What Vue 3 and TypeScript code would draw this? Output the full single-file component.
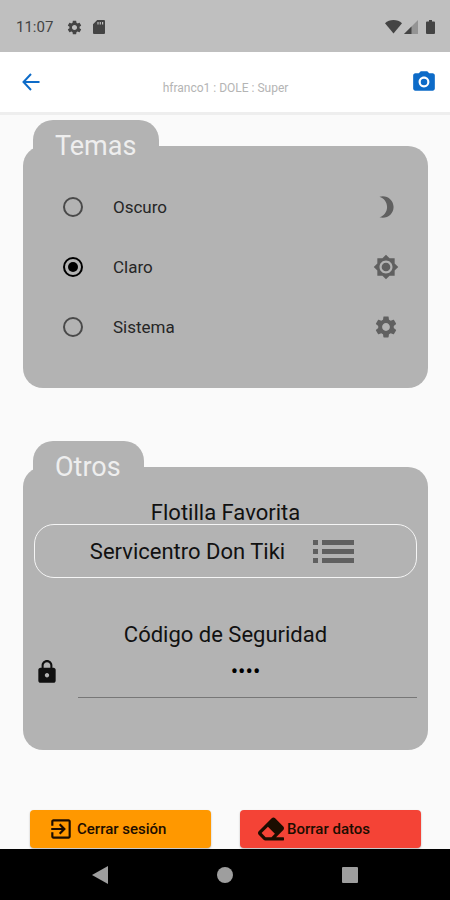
<script setup lang="ts">
import { ref } from 'vue'

interface ThemeOption {
  id: string
  label: string
  icon: string
}

const themes: ThemeOption[] = [
  {
    id: 'oscuro',
    label: 'Oscuro',
    icon: 'M9 2c-1.05 0-2.05.16-3 .46 4.06 1.27 7 5.06 7 9.54 0 4.48-2.94 8.27-7 9.54.95.3 1.95.46 3 .46 5.52 0 10-4.48 10-10S14.52 2 9 2z',
  },
  {
    id: 'claro',
    label: 'Claro',
    icon: 'M20 8.69V4h-4.69L12 .69 8.69 4H4v4.69L.69 12 4 15.31V20h4.69L12 23.31 15.31 20H20v-4.69L23.31 12 20 8.69zM12 18c-3.31 0-6-2.69-6-6s2.69-6 6-6 6 2.69 6 6-2.69 6-6 6zm0-10c-2.21 0-4 1.79-4 4s1.79 4 4 4 4-1.79 4-4-1.79-4-4-4z',
  },
  {
    id: 'sistema',
    label: 'Sistema',
    icon: 'M19.14 12.94c.04-.3.06-.61.06-.94 0-.32-.02-.64-.07-.94l2.03-1.58c.18-.14.23-.41.12-.61l-1.92-3.32c-.12-.22-.37-.29-.59-.22l-2.39.96c-.5-.38-1.03-.7-1.62-.94l-.36-2.54c-.04-.24-.24-.41-.48-.41h-3.84c-.24 0-.43.17-.47.41l-.36 2.54c-.59.24-1.13.57-1.62.94l-2.39-.96c-.22-.08-.47 0-.59.22L2.74 8.87c-.12.21-.08.47.12.61l2.03 1.58c-.05.3-.09.63-.09.94s.02.64.07.94l-2.03 1.58c-.18.14-.23.41-.12.61l1.92 3.32c.12.22.37.29.59.22l2.39-.96c.5.38 1.03.7 1.62.94l.36 2.54c.05.24.24.41.48.41h3.84c.24 0 .44-.17.47-.41l.36-2.54c.59-.24 1.13-.56 1.62-.94l2.39.96c.22.08.47 0 .59-.22l1.92-3.32c.12-.22.07-.47-.12-.61l-2.01-1.58zM12 15.6c-1.98 0-3.6-1.62-3.6-3.6s1.62-3.6 3.6-3.6 3.6 1.62 3.6 3.6-1.62 3.6-3.6 3.6z',
  },
]

const gearIcon = themes[2].icon
const selectedTheme = ref('claro')
const securityCode = ref('1234')
</script>

<template>
  <div class="screen">
    <div class="status-bar">
      <span class="clock">11:07</span>
      <svg class="status-gear" viewBox="0 0 24 24"><path :d="gearIcon" /></svg>
      <svg class="status-sd" viewBox="0 0 12 14">
        <path fill-rule="evenodd" d="M4.2 0H11a1 1 0 0 1 1 1v12a1 1 0 0 1-1 1H1a1 1 0 0 1-1-1V4.2zM4.4 2v2.6h1.2V2zM6.7 2v2.6h1.2V2zM9 2v2.6h1.2V2z" />
      </svg>
      <svg class="status-wifi" viewBox="0 0 17 14">
        <path d="M0 3.2C2.3 1.2 5.200 0 8.500 0S14.700 1.200 17 3.200L8.500 13.500z" />
      </svg>
      <svg class="status-signal" viewBox="0 0 14 14">
        <path class="faint" d="M14 0v14H0z" />
        <path d="M7.500 6.500V14H0z" />
      </svg>
      <svg class="status-battery" viewBox="0 0 9 14">
        <path d="M3 0h3v1.400h2a1 1 0 0 1 1 1V13a1 1 0 0 1-1 1H1a1 1 0 0 1-1-1V2.400a1 1 0 0 1 1-1h2z" />
      </svg>
    </div>

    <header class="app-bar">
      <button class="icon-button" type="button" aria-label="Volver">
        <svg class="back" viewBox="0 0 18 18">
          <path d="M9 1L1.500 9 9 17M1.500 9H17.500" />
        </svg>
      </button>
      <h1 class="title">hfranco1 : DOLE : Super</h1>
      <button class="icon-button" type="button" aria-label="Cámara">
        <svg class="icon" viewBox="0 0 24 24">
          <circle cx="12" cy="12" r="3" />
          <path d="M9 2L7.170 4H4c-1.100 0-2 .9-2 2v12c0 1.100.9 2 2 2h16c1.100 0 2-.9 2-2V6c0-1.100-.9-2-2-2h-3.170L15 2H9zm3 15c-2.760 0-5-2.240-5-5s2.240-5 5-5 5 2.240 5 5-2.240 5-5 5z" />
        </svg>
      </button>
    </header>

    <main class="content">
      <section class="folder">
        <h2 class="tab">Temas</h2>
        <div class="card themes" role="radiogroup" aria-label="Temas">
          <label v-for="theme in themes" :key="theme.id" class="theme-row">
            <input v-model="selectedTheme" class="radio" type="radio" name="theme" :value="theme.id" />
            <span class="theme-name">{{ theme.label }}</span>
            <svg class="icon" viewBox="0 0 24 24"><path :d="theme.icon" /></svg>
          </label>
        </div>
      </section>

      <section class="folder">
        <h2 class="tab">Otros</h2>
        <div class="card others">
          <div id="fleet-label" class="field-label">Flotilla Favorita</div>
          <button class="fleet" type="button" aria-describedby="fleet-label">
            <span>Servicentro Don Tiki</span>
            <svg class="list" viewBox="0 0 48 24">
              <path d="M0 0h5v5H0zM0 9h5v5H0zM0 18h5v5H0zM9 0h32v5H9zM9 9h32v5H9zM9 18h32v5H9z" />
            </svg>
          </button>
          <label class="field-label code-label" for="security-code">Código de Seguridad</label>
          <div class="code-row">
            <svg class="icon" viewBox="0 0 24 24">
              <path d="M18 8h-1V6c0-2.760-2.240-5-5-5S7 3.240 7 6v2H6c-1.100 0-2 .9-2 2v10c0 1.100.9 2 2 2h12c1.100 0 2-.9 2-2V10c0-1.100-.9-2-2-2zm-6 9c-1.100 0-2-.9-2-2s.9-2 2-2 2 .9 2 2-.9 2-2 2zm3.100-9H8.900V6c0-1.710 1.390-3.100 3.100-3.100s3.100 1.390 3.100 3.100v2z" />
            </svg>
            <input id="security-code" v-model="securityCode" class="code" type="password" autocomplete="off" />
          </div>
        </div>
      </section>

      <div class="actions">
        <button class="action logout" type="button">
          <svg class="icon" viewBox="0 0 24 24">
            <path d="M10.090 15.590L11.500 17l5-5-5-5-1.410 1.410L12.670 11H3v2h9.670l-2.580 2.590zM19 3H5c-1.110 0-2 .9-2 2v4h2V5h14v14H5v-4H3v4c0 1.100.89 2 2 2h14c1.100 0 2-.9 2-2V5c0-1.100-.9-2-2-2z" />
          </svg>
          <span>Cerrar sesión</span>
        </button>
        <button class="action erase" type="button">
          <svg class="icon" viewBox="0 0 512 512">
            <path d="M497.941 273.941c18.745-18.745 18.745-49.137 0-67.882l-160-160c-18.745-18.745-49.136-18.746-67.883 0l-256 256c-18.745 18.745-18.745 49.137 0 67.882l96 96A48.004 48.004 0 0 0 144 480h356c6.627 0 12-5.373 12-12v-40c0-6.627-5.373-12-12-12H355.883l142.058-142.059zm-302.627-62.627l137.373 137.373L265.373 416H150.628l-80-80 124.686-124.686z" />
          </svg>
          <span>Borrar datos</span>
        </button>
      </div>
    </main>

    <nav class="nav-bar" aria-label="Sistema">
      <button type="button" aria-label="Atrás">
        <svg viewBox="0 0 18 18"><path d="M17 0v18L1 9z" /></svg>
      </button>
      <button type="button" aria-label="Inicio">
        <svg viewBox="0 0 18 18"><circle cx="9" cy="9" r="8" /></svg>
      </button>
      <button type="button" aria-label="Recientes">
        <svg viewBox="0 0 18 18"><rect x="1" y="1" width="16" height="16" rx="1" /></svg>
      </button>
    </nav>
  </div>
</template>

<style>
body {
  margin: 0;
  background: #fafafa;
}
</style>

<style scoped>
.screen {
  display: flex;
  flex-direction: column;
  min-height: 100vh;
  color: #111;
  font-family: Roboto, 'Liberation Sans', sans-serif;
}

.screen *,
.screen *::before {
  box-sizing: border-box;
}

button {
  padding: 0;
  border: 0;
  background: none;
  color: inherit;
  font: inherit;
}

svg {
  display: block;
  flex: none;
  fill: currentColor;
}

.icon {
  width: 26px;
  height: 26px;
}

.status-bar {
  display: flex;
  align-items: center;
  height: 52px;
  padding: 2px 15px 0 16px;
  background: #bfbfbf;
  color: #444;
}

.clock {
  font-size: 15px;
  line-height: 20px;
}

.status-gear {
  width: 17px;
  height: 17px;
  margin-left: 13px;
}

.status-sd {
  width: 12px;
  height: 14px;
  margin-left: 10px;
}

.status-wifi {
  width: 17px;
  height: 14px;
  margin-left: auto;
}

.status-signal {
  width: 14px;
  height: 14px;
  margin-left: 2px;
}

.status-battery {
  width: 9px;
  height: 14px;
  margin-left: 8px;
}

.faint {
  opacity: 0.35;
}

.app-bar {
  display: grid;
  grid-template-columns: 26px 1fr 26px;
  align-items: center;
  height: 60px;
  padding: 0 13px 0 18px;
  background: #fff;
  box-shadow: 0 3px 0 #eee;
}

.icon-button {
  display: grid;
  place-items: center;
  color: #0d6bc8;
}

.back {
  width: 18px;
  height: 18px;
  fill: none;
  stroke: currentColor;
  stroke-width: 2;
}

.title {
  margin: 0;
  padding: 12px 4px 0 0;
  color: #b4b4b4;
  font-size: 12px;
  font-weight: 400;
  line-height: 16px;
  text-align: center;
}

.content {
  display: flex;
  flex: 1;
  flex-direction: column;
  gap: 53px;
  padding: 8px 22px 1px 23px;
}

.tab {
  width: fit-content;
  height: 52px;
  margin: 0 0 -26px 10px;
  padding: 11px 23px 0 22px;
  border-radius: 20px 20px 0 0;
  background: #b3b3b3;
  color: #eee;
  font-size: 27px;
  font-weight: 400;
  line-height: 30px;
  position: relative;
}

.card {
  border-radius: 20px;
  background: #b3b3b3;
}

.themes {
  padding: 31px 29px 31px 40px;
}

.theme-row {
  display: flex;
  align-items: center;
  height: 60px;
  color: #606060;
}

.radio {
  display: grid;
  place-items: center;
  width: 20px;
  height: 20px;
  margin: 0;
  border: 2px solid #4a4a4a;
  border-radius: 50%;
  appearance: none;
}

.radio:checked {
  border-color: #000;
}

.radio:checked::before {
  width: 10px;
  height: 10px;
  border-radius: 50%;
  background: #000;
  content: '';
}

.theme-name {
  flex: 1;
  margin-left: 30px;
  color: #262626;
  font-size: 17px;
  line-height: 20px;
}

.others {
  padding: 33px 11px 52px;
}

.field-label {
  display: block;
  height: 24px;
  font-size: 22px;
  line-height: 26px;
  text-align: center;
}

.fleet {
  display: flex;
  align-items: center;
  justify-content: center;
  gap: 28px;
  width: 100%;
  height: 54px;
  padding-top: 2px;
  border: 1px solid #f5f5f5;
  border-radius: 20px;
  font-size: 22px;
  line-height: 24px;
}

.list {
  width: 48px;
  height: 24px;
  color: #606060;
}

.code-label {
  margin-top: 44px;
}

.code-row {
  display: flex;
  align-items: center;
  gap: 18px;
}

.code {
  flex: 1;
  min-width: 0;
  height: 52px;
  padding: 0 4px 0 0;
  border: 0;
  border-bottom: 1px solid #777;
  outline: 0;
  background: none;
  color: #000;
  font: 22px Roboto, 'Liberation Sans', sans-serif;
  text-align: center;
}

.actions {
  display: grid;
  grid-template-columns: 1fr 1fr;
  gap: 29px;
  margin-top: auto;
  padding: 0 7px;
}

.action {
  display: flex;
  align-items: center;
  height: 38px;
  border-radius: 4px;
  box-shadow: 0 1px 2px #0004;
  color: #1c0d00;
  font-size: 15px;
  font-weight: 500;
  line-height: 20px;
}

.logout {
  gap: 3px;
  padding-left: 18px;
  background: #ff9800;
}

.erase {
  gap: 3px;
  padding-left: 18px;
  background: #f44336;
}

.nav-bar {
  display: grid;
  grid-template-columns: repeat(3, 1fr);
  height: 51px;
  padding: 0 37px;
  background: #000;
  color: #9e9e9e;
}

.nav-bar button {
  display: grid;
  place-items: center;
}

.nav-bar svg {
  width: 18px;
  height: 18px;
}
</style>
